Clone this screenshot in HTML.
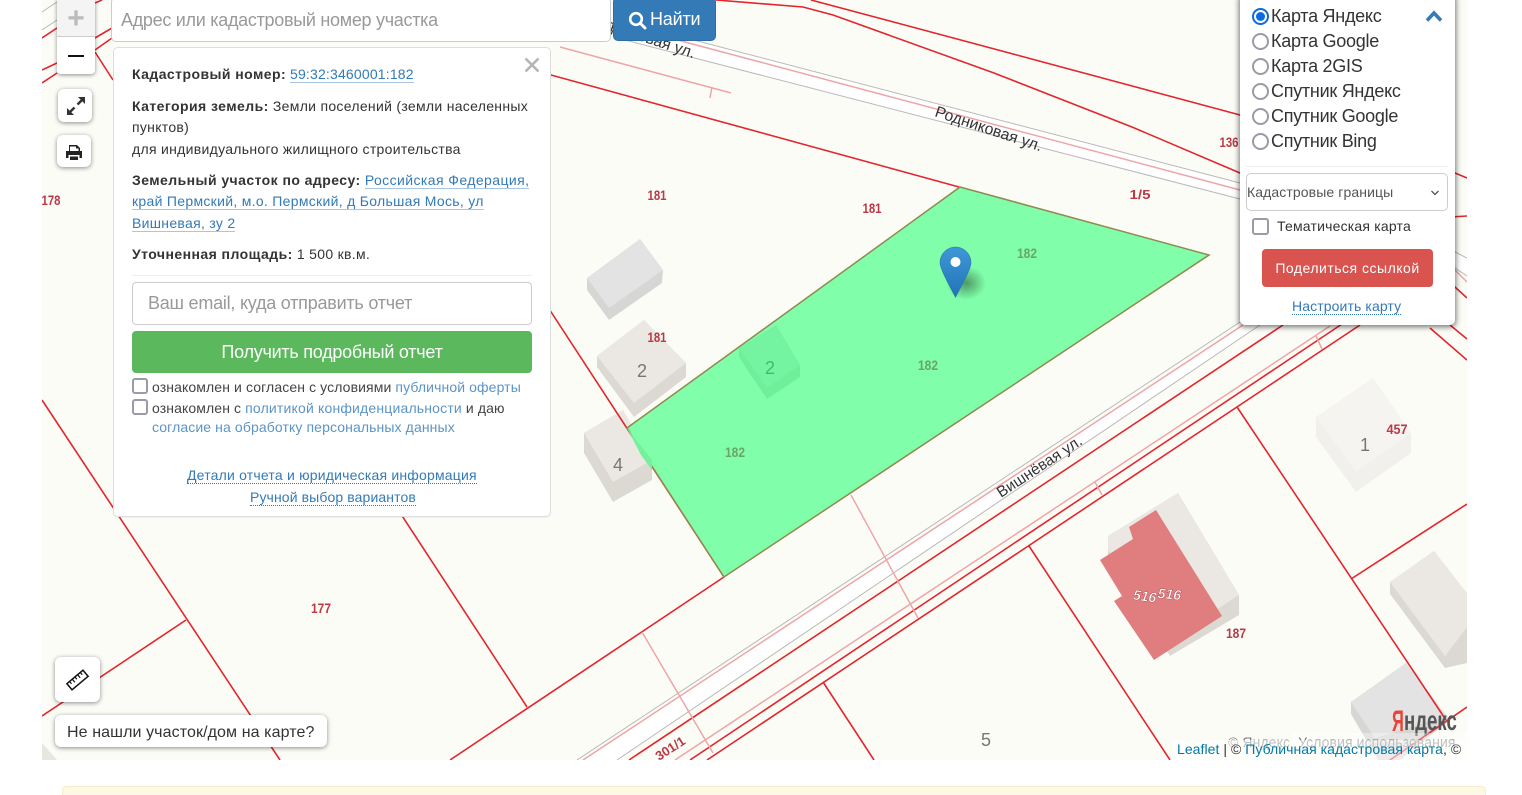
<!DOCTYPE html>
<html lang="ru"><head><meta charset="utf-8"><title>Карта</title>
<style>
html,body{margin:0;padding:0;background:#fff;width:1522px;height:795px;overflow:hidden}
body{font-family:"Liberation Sans",sans-serif;font-size:14px;color:#333;position:relative}
.a{position:absolute;white-space:nowrap;box-sizing:border-box}
a{color:#337ab7;text-decoration:none}
.u{border-bottom:1px solid #a9c6e0}
.d{border-bottom:1px dotted #337ab7}
.l{color:#5b94c6}
b{font-weight:700;letter-spacing:.44px}
.s3{letter-spacing:.3px}
.s1{letter-spacing:.11px}
svg.map{position:absolute;left:0;top:0}
.r{stroke:#e2262d;stroke-width:1.6;fill:none}
.p{stroke:#eda6a8;stroke-width:1.5;fill:none}
.g{stroke:#b9b9b9;stroke-width:1;fill:none}
.n{font:bold 14px "Liberation Sans",sans-serif;fill:#b93a46;text-anchor:middle}
.gn{font:bold 14px "Liberation Sans",sans-serif;fill:#6aa56c;text-anchor:middle}
.h{font:18px "Liberation Sans",sans-serif;fill:#777;text-anchor:middle}
.st{font:15.8px "Liberation Sans",sans-serif;fill:#333}
.box{background:#fff;border-radius:6px;box-shadow:0 1px 5px rgba(0,0,0,.45)}
.radio{position:absolute;left:1252px;width:17px;height:17px;border:2px solid #9a9aa8;border-radius:50%;box-sizing:border-box;background:#fff}
.rt{position:absolute;left:1271px;font-size:18px;line-height:25px;height:25px;white-space:nowrap;color:#333;letter-spacing:-.27px}
.cb{position:absolute;width:16px;height:16px;border:2px solid #9a9aa8;border-radius:3px;box-sizing:border-box;background:#fff}
</style></head><body>
<svg class="map" width="1522" height="795" viewBox="0 0 1522 795">
<defs><clipPath id="c"><rect x="42" y="0" width="1425" height="760"/></clipPath>
<radialGradient id="sh"><stop offset="0" stop-color="#000" stop-opacity=".4"/><stop offset="1" stop-color="#000" stop-opacity="0"/></radialGradient>
<linearGradient id="pin" x1="0" y1="0" x2="0" y2="1"><stop offset="0" stop-color="#3f98d6"/><stop offset="1" stop-color="#2173b8"/></linearGradient></defs>
<g clip-path="url(#c)">
<rect x="42" y="0" width="1425" height="760" fill="#fcfcf7"/>
<polygon points="583,760 1243,325 1260,325 617,760" fill="#fff"/>
<polygon points="625,40 686,38 1240,183 1455,252 1467,258 1467,276 1455,268 1240,199" fill="#fff"/>
<!-- buildings -->
<polygon points="587,278 640,239 663,270 662,283 609,320 587,290" fill="#d6d6d5"/><polygon points="587,278 640,239 663,270 609,308" fill="#e3e3e3"/>
<polygon points="597,356 644,320 686,363 686,377 634,417 597,367" fill="#dcd9d3"/><polygon points="597,356 644,320 686,363 634,403" fill="#ebe8e3"/>
<polygon points="584,433 623,410 652,460 652,480 613,502 584,453" fill="#dcd9d3"/><polygon points="584,433 623,410 652,460 613,482" fill="#ebe8e3"/>
<polygon points="1316,417 1373,378 1411,433 1411,453 1356,492 1316,437" fill="#f1f0ed"/><polygon points="1316,417 1373,378 1411,433 1356,472" fill="#f5f4f1"/>
<polygon points="1108,536 1178,493 1239,595 1239,615 1170,656 1108,560" fill="#dcd9d3"/><polygon points="1108,536 1178,493 1239,595 1170,640 1108,550" fill="#ebe8e3"/>
<polygon points="1100,560 1133,539 1129,527 1156,510 1222,616 1154,660 1114,601 1122,596" fill="#e07e7f"/>
<polygon points="1390,582 1434,551 1480,610 1480,660 1445,668 1390,594" fill="#dcd9d3"/><polygon points="1390,582 1434,551 1480,610 1445,656" fill="#ebe8e3"/>
<polygon points="1351,702 1406,663 1450,720 1400,760 1378,760 1351,714" fill="#d6d6d5"/><polygon points="1351,702 1406,663 1447,716 1375,738" fill="#e3e3e3"/>
<polygon points="42,743 57,760 42,760" fill="#e8e6e1"/>
<!-- top road -->
<polyline class="g" points="686,38 1240,183 1455,252 1467,258"/><polyline class="g" points="625,40 1240,199 1455,268 1467,276"/>
<polyline class="p" points="640,30 1240,190 1455,270 1467,282"/>
<line class="p" x1="560" y1="47" x2="731" y2="93"/><line class="p" x1="712" y1="87" x2="710" y2="98"/>
<polyline class="r" points="716,0 803,7 833,15 994,73 1132,127 1240,173 1455,287 1467,298"/>
<polyline class="r" points="811,0 972,43 1240,115 1455,173 1467,178"/>
<line class="r" x1="540" y1="72" x2="959" y2="187"/>
<line class="r" x1="1240" y1="230" x2="1467" y2="216"/>
<!-- parcels lower -->
<line class="r" x1="450" y1="760" x2="724" y2="577"/>
<line class="r" x1="540" y1="295" x2="724" y2="577"/>
<line class="r" x1="42" y1="400" x2="280" y2="760"/>
<line class="r" x1="42" y1="716" x2="186" y2="620"/>
<line class="r" x1="395" y1="505" x2="527" y2="707"/>
<line class="g" x1="617" y1="760" x2="1260" y2="325"/>
<line class="g" x1="577" y1="760" x2="1240" y2="322"/>
<line class="p" x1="583" y1="760" x2="1243" y2="325"/>
<line class="r" x1="629" y1="760" x2="1283" y2="325"/>
<line class="p" x1="675" y1="760" x2="1330" y2="326"/>
<line class="r" x1="690" y1="760" x2="1345" y2="322"/>
<line class="r" x1="707" y1="760" x2="1360" y2="325"/>
<line class="p" x1="851" y1="495" x2="918" y2="618"/>
<line class="p" x1="642" y1="632" x2="713" y2="753"/>
<line class="p" x1="1095" y1="482" x2="1102" y2="495"/><line class="p" x1="1316" y1="336" x2="1322" y2="349"/>
<line class="r" x1="1029" y1="546" x2="1170" y2="760"/>
<line class="r" x1="823" y1="682" x2="874" y2="760"/>
<line class="r" x1="1237" y1="407" x2="1446" y2="720"/>
<line class="r" x1="1351" y1="579" x2="1467" y2="504"/>
<line class="r" x1="1467" y1="707" x2="1387" y2="762"/>
<line class="r" x1="1430" y1="328" x2="1467" y2="360"/>
<line class="r" x1="1450" y1="325" x2="1467" y2="339"/>
<!-- top-left -->
<line class="g" x1="42" y1="12" x2="57" y2="2"/><line class="g" x1="42" y1="30" x2="57" y2="20"/>
<line class="r" x1="42" y1="38" x2="57" y2="28"/><line class="r" x1="42" y1="70" x2="57" y2="63"/><line class="r" x1="42" y1="83" x2="57" y2="73"/>
<line class="r" x1="95" y1="38" x2="112" y2="28"/><line class="r" x1="95" y1="50" x2="112" y2="38"/><line class="r" x1="95" y1="52" x2="113" y2="80"/><line class="r" x1="95" y1="3" x2="102" y2="0"/>
<!-- selected parcel -->
<polygon points="960,187 1209,255 724,577 627,428" fill="#80fea9" stroke="#8f8a4f" stroke-width="1.5"/>
<polygon points="739,357 739,348 776,325 800,365 800,377 767,399" fill="#6fef9a"/><polygon points="739,348 776,325 800,365 767,388" fill="#74f3a0"/>
<polygon points="627,428 652,460 652,470 641,455" fill="#75f09c"/>
<!-- labels -->
<text class="n" textLength="19" lengthAdjust="spacingAndGlyphs" x="657" y="200">181</text><text class="n" textLength="19" lengthAdjust="spacingAndGlyphs" x="872" y="213">181</text><text class="n" textLength="21" lengthAdjust="spacingAndGlyphs" x="1140" y="199" style="font-size:12.500px">1/5</text><text class="n" textLength="19" lengthAdjust="spacingAndGlyphs" x="51" y="205">178</text><text class="n" textLength="19" lengthAdjust="spacingAndGlyphs" x="1229" y="147">136</text><text class="n" textLength="19" lengthAdjust="spacingAndGlyphs" x="657" y="342">181</text><text class="n" textLength="21" lengthAdjust="spacingAndGlyphs" x="1397" y="434">457</text><text class="n" textLength="20" lengthAdjust="spacingAndGlyphs" x="1236" y="638">187</text><text class="n" textLength="20" lengthAdjust="spacingAndGlyphs" x="321" y="613">177</text>
<text class="gn" textLength="20" lengthAdjust="spacingAndGlyphs" x="1027" y="258">182</text><text class="gn" textLength="20" lengthAdjust="spacingAndGlyphs" x="928" y="370">182</text><text class="gn" textLength="20" lengthAdjust="spacingAndGlyphs" x="735" y="457">182</text>
<text class="h" x="642" y="377">2</text><text class="h" x="618" y="471">4</text><text class="h" x="1365" y="451">1</text><text class="h" x="986" y="746">5</text>
<text class="h" x="770" y="374" style="fill:#44b873">2</text>
<text class="st" transform="translate(934,116) rotate(18.4)">Родниковая ул.</text>
<text class="st" transform="translate(587,23) rotate(18.4)">Родниковая ул.</text>
<text class="st" transform="translate(1001,498) rotate(-33.5)" style="font-size:15.500px">Вишнёвая ул.</text>
<text transform="translate(659,761) rotate(-33)" style="font:bold 13px 'Liberation Sans',sans-serif;fill:#b93a46">301/1</text>
<text transform="translate(1144,601) rotate(8)" text-anchor="middle" style="font:italic bold 14px 'Liberation Sans',sans-serif;fill:#fff;stroke:#a8404a;stroke-width:.4">516</text>
<text transform="translate(1169,599) rotate(5)" text-anchor="middle" style="font:italic bold 14px 'Liberation Sans',sans-serif;fill:#fff;stroke:#a8404a;stroke-width:.4">516</text>
<!-- pin -->
<ellipse cx="966" cy="283" rx="20" ry="17" fill="url(#sh)"/>
<path d="M955.5 247c-8.500 0-15.500 7-15.500 15.500 0 7 10 24 15.500 35 5.500-11 15.500-28 15.500-35 0-8.500-7-15.500-15.500-15.500z" fill="url(#pin)" stroke="#2a6fa8" stroke-width=".5"/>
<circle cx="955.500" cy="262" r="5" fill="#fff"/>
<!-- yandex -->
<text transform="translate(1392,731) scale(.55,1)" style="font:bold 30px 'Liberation Sans',sans-serif;fill:#e8443a">Я</text>
<text transform="translate(1404,730) scale(.665,1)" style="font:bold 28px 'Liberation Sans',sans-serif;fill:#555">ндекс</text>
<rect x="1292" y="733" width="175" height="10" fill="#fff" opacity=".35"/>
<text x="1228" y="747" xml:space="preserve" style="font:14px 'Liberation Sans',sans-serif;fill:#777;letter-spacing:.1px;white-space:pre">© Яндекс  Условия использования</text>
</g></svg>

<div class="a" style="left:1172px;top:740px;width:295px;height:20px;background:rgba(255,255,255,.55)"></div>
<div class="a" style="left:1177px;top:741px;font-size:14px;line-height:16px;color:#333;letter-spacing:.05px"><span style="color:#0078a8">Leaflet</span> | © <span style="color:#0078a8">Публичная кадастровая карта</span>, ©</div>

<!-- zoom -->
<div class="a" style="left:57px;top:-3px;width:38px;height:77px;border-radius:4px;box-shadow:0 1px 4px rgba(0,0,0,.45);background:#fff;overflow:hidden">
<div class="a" style="left:0;top:0;width:38px;height:40px;background:#f4f4f4;border-bottom:1px solid #ccc;color:#bbb;font:bold 30px/44px 'Liberation Sans',sans-serif;text-align:center">+</div>
<div class="a" style="left:11px;top:58px;width:16px;height:2px;background:#111"></div></div>

<div class="a box" style="left:58px;top:89px;width:34px;height:33px"><svg width="34" height="33" viewBox="0 0 34 33"><g fill="#333"><path d="M20 8h7v7z"/><path d="M9 26v-7l7 7z"/></g><path d="M24 11l-4.500 4.500M12 23l4.500-4.500" stroke="#333" stroke-width="2.400"/></svg></div>
<div class="a box" style="left:57px;top:135px;width:34px;height:32px"><svg width="34" height="32" viewBox="0 0 34 32"><path fill="#222" d="M12 10h8l3 3v3h2v7h-2.500v-3h-11v3H9v-7h3zm1 1.500V16h8.500v-2.500h-2.500v-2zM13 21.500h8V25h-8z"/></svg></div>

<!-- search -->
<div class="a" style="left:111px;top:-3px;width:500px;height:45px;background:#fff;border:1px solid #ccc;border-radius:5px;padding:0 9px;font-size:18px;line-height:44px;color:#999;letter-spacing:-.29px">Адрес или кадастровый номер участка</div>
<div class="a" style="left:613px;top:-3px;width:103px;height:44px;background:#337ab7;border:1px solid #2e6da4;border-radius:5px;color:#fff;font-size:18px;line-height:43px;padding-left:36px;letter-spacing:-.2px">Найти
<svg class="a" style="left:14px;top:13px" width="19" height="19" viewBox="0 0 19 19"><circle cx="8" cy="8" r="5.800" fill="none" stroke="#fff" stroke-width="2.600"/><line x1="12.500" y1="12.500" x2="17" y2="17" stroke="#fff" stroke-width="3" stroke-linecap="round"/></svg></div>

<!-- info panel -->
<div class="a" style="left:113px;top:47px;width:438px;height:470px;background:#fff;border:1px solid #ddd;border-radius:5px;box-shadow:0 1px 1px rgba(0,0,0,.05)"></div>
<svg class="a" style="left:523px;top:56px" width="18" height="18" viewBox="0 0 18 18"><path d="M2.500 2.500l13 13M15.500 2.500l-13 13" stroke="#b5b5b5" stroke-width="2.600"/></svg>
<div class="a" style="left:132px;top:64px;line-height:21px"><b>Кадастровый номер:</b> <a class="u" style="letter-spacing:.18px">59:32:3460001:182</a></div>
<div class="a s3" style="left:132px;top:95.7px;line-height:21.500px"><b>Категория земель:</b> Земли поселений (земли населенных<br>пунктов)<br>для индивидуального жилищного строительства</div>
<div class="a s3" style="left:132px;top:169.7px;line-height:21.500px"><b>Земельный участок по адресу:</b> <a class="u" style="letter-spacing:.42px">Российская Федерация,</a><br><a class="u">край Пермский, м.о. Пермский, д Большая Мось, ул</a><br><a class="u">Вишневая, зу 2</a></div>
<div class="a s3" style="left:132px;top:244px;line-height:21px"><b>Уточненная площадь:</b> 1 500 кв.м.</div>
<div class="a" style="left:132px;top:275px;width:400px;height:1px;background:#eee"></div>
<div class="a" style="left:132px;top:282px;width:400px;height:43px;border:1px solid #ccc;border-radius:4px;font-size:18px;line-height:41px;padding-left:15px;color:#999;letter-spacing:-.23px">Ваш email, куда отправить отчет</div>
<div class="a" style="left:132px;top:331px;width:400px;height:42px;background:#5cb85c;border-radius:4px;color:#fff;font-size:18px;line-height:42px;text-align:center;letter-spacing:-.25px">Получить подробный отчет</div>
<div class="cb" style="left:132px;top:378px"></div>
<div class="a s1" style="left:152px;top:378px;line-height:19px;color:#444">ознакомлен и согласен с условиями <span class="l">публичной оферты</span></div>
<div class="cb" style="left:132px;top:399px"></div>
<div class="a s1" style="left:152px;top:399px;line-height:19px;color:#444">ознакомлен с <span class="l" style="letter-spacing:.18px">политикой конфиденциальности</span> и даю<br><span class="l">согласие на обработку персональных данных</span></div>
<div class="a" style="left:187px;top:466px;line-height:18px;letter-spacing:.2px"><a class="d">Детали отчета и юридическая информация</a></div>
<div class="a s1" style="left:250px;top:488px;line-height:18px"><a class="d">Ручной выбор вариантов</a></div>

<!-- right panel -->
<div class="a" style="left:1240px;top:-6px;width:215px;height:331px;background:#fff;border-radius:5px;box-shadow:0 1px 6px 1px rgba(0,0,0,.55)"></div>
<div class="radio" style="top:8px;border-color:#0b6be0"><div class="a" style="left:2px;top:2px;width:9px;height:9px;border-radius:50%;background:#0b6be0"></div></div>
<div class="rt" style="top:4px">Карта Яндекс</div>
<svg class="a" style="left:1425px;top:10px" width="18" height="13" viewBox="0 0 18 13"><path d="M2 10.500L9 3l7 7.500" fill="none" stroke="#337ab7" stroke-width="3.500"/></svg>
<div class="radio" style="top:33px"></div><div class="rt" style="top:29px">Карта Google</div>
<div class="radio" style="top:58px"></div><div class="rt" style="top:54px">Карта 2GIS</div>
<div class="radio" style="top:83px"></div><div class="rt" style="top:79px">Спутник Яндекс</div>
<div class="radio" style="top:108px"></div><div class="rt" style="top:104px">Спутник Google</div>
<div class="radio" style="top:133px"></div><div class="rt" style="top:129px">Спутник Bing</div>
<div class="a" style="left:1246px;top:166px;width:202px;height:1px;background:#eee"></div>
<div class="a" style="left:1246px;top:173px;width:202px;height:38px;border:1px solid #ccc;border-radius:5px;font-size:14px;line-height:36px;color:#555;letter-spacing:.1px">Кадастровые границы
<svg class="a" style="left:183px;top:15px" width="10" height="8" viewBox="0 0 10 8"><path d="M1.500 2l3.500 3.500L8.500 2" fill="none" stroke="#555" stroke-width="1.300"/></svg></div>
<div class="cb" style="left:1252px;top:218px;width:17px;height:17px"></div>
<div class="a" style="left:1277px;top:217px;line-height:18px;letter-spacing:.2px">Тематическая карта</div>
<div class="a" style="left:1262px;top:249px;width:171px;height:38px;background:#d9534f;border-radius:4px;color:#fff;line-height:38px;text-align:center;letter-spacing:.5px">Поделиться ссылкой</div>
<div class="a s1" style="left:1292px;top:298px;line-height:16px"><a class="d">Настроить карту</a></div>

<!-- bottom-left -->
<div class="a box" style="left:55px;top:657px;width:45px;height:45px"><svg width="45" height="45" viewBox="0 0 45 45"><g transform="translate(22.500,23) rotate(-40)"><rect x="-10.500" y="-4" width="21" height="8" fill="none" stroke="#111" stroke-width="1.500"/><path d="M-7-4v3M-3.500-4v4M0-4v3M3.500-4v4M7-4v3" stroke="#111" stroke-width="1.200"/></g></svg></div>
<div class="a box" style="left:55px;top:715px;width:272px;height:32px;font-size:16px;line-height:35px;padding-left:12px;letter-spacing:.1px">Не нашли участок/дом на карте?</div>

<!-- alert -->
<div class="a" style="left:62px;top:786px;width:1424px;height:40px;background:#fcf8e3;border:1px solid #faebcc;border-radius:4px"></div>
</body></html>
